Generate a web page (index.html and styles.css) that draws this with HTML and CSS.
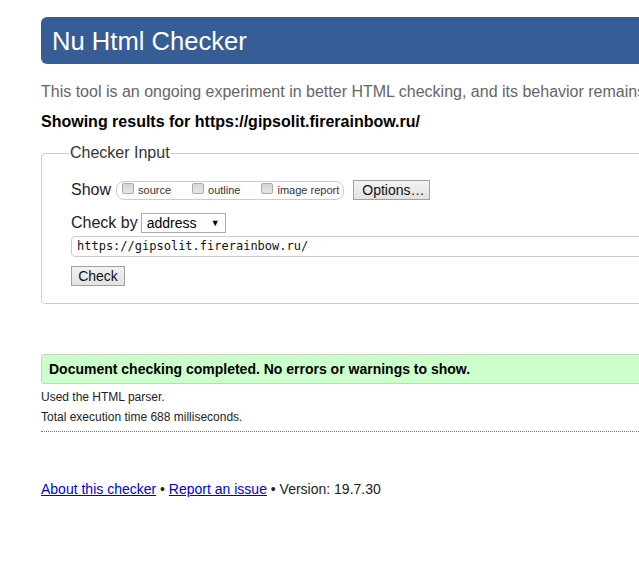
FILE: index.html
```html
<!DOCTYPE html>
<html lang="en">
<head>
<meta charset="utf-8">
<title>Nu Html Checker</title>
<link rel="stylesheet" href="styles.css">
</head>
<body>
<div class="page">
  <h1 class="title">Nu Html Checker</h1>
  <p class="intro">This tool is an ongoing experiment in better HTML checking, and its behavior remains subject to change</p>
  <p class="showing">Showing results for https://gipsolit.firerainbow.ru/</p>
  <fieldset class="input-box">
    <legend class="legend">Checker Input</legend>
    <div class="row show-row">
      <span class="label">Show</span>
      <span class="pill">
        <label class="opt"><input type="checkbox" class="cb">source</label>
        <label class="opt"><input type="checkbox" class="cb">outline</label>
        <label class="opt"><input type="checkbox" class="cb">image report</label>
      </span>
      <button class="btn options">Options…</button>
    </div>
    <div class="row checkby-row">
      <span class="label">Check by</span>
      <span class="select"><span class="select-text">address</span><span class="arrow">▼</span></span>
    </div>
    <div class="url">https://gipsolit.firerainbow.ru/</div>
    <button class="btn check">Check</button>
  </fieldset>
  <div class="success">Document checking completed. No errors or warnings to show.</div>
  <p class="meta meta-first">Used the HTML parser.</p>
  <p class="meta">Total execution time 688 milliseconds.</p>
  <div class="dotted"></div>
  <p class="footer"><a href="#">About this checker</a> • <a href="#">Report an issue</a> • Version: 19.7.30</p>
</div>
</body>
</html>
```

FILE: styles.css
```css
html, body {
  margin: 0;
  padding: 0;
  background: #fff;
  overflow: hidden;
}
body {
  font-family: "Liberation Sans", Arial, sans-serif;
  color: #222;
}
.page {
  width: 900px;
  padding: 17px 0 0 41px;
}
.title {
  margin: 0;
  height: 47px;
  background: #365d95;
  color: #fff;
  font-weight: normal;
  font-size: 25.6px;
  line-height: 49px;
  padding-left: 11px;
  border-radius: 6px;
  box-sizing: border-box;
}
.intro {
  margin: 19px 0 0;
  font-size: 16px;
  line-height: 18px;
  color: #666;
  white-space: nowrap;
}
.showing {
  margin: 12px 0 0;
  font-size: 16px;
  line-height: 18px;
  font-weight: bold;
  color: #000;
  white-space: nowrap;
}
.input-box {
  margin: 13px 0 0;
  padding: 14px 29px 17px;
  border: 1px solid #ccc;
  border-radius: 4px;
  min-width: 0;
}
.legend {
  padding: 0 1px;
  font-size: 16px;
  line-height: 18px;
  color: #333;
  margin-left: -2px;
}
.row {
  display: flex;
  align-items: center;
}
.label {
  font-size: 16px;
  color: #222;
}
.show-row {
  margin-top: 4px;
}
.pill {
  display: inline-flex;
  align-items: center;
  margin-left: 5px;
  height: 17px;
  padding: 0 4px 0 5px;
  border: 1px solid #ccc;
  border-radius: 8px;
}
.opt {
  display: inline-flex;
  align-items: center;
  font-size: 11px;
  color: #333;
  margin-right: 21px;
}
.opt:last-child {
  margin-right: 0;
}
.cb {
  appearance: none;
  -webkit-appearance: none;
  width: 12px;
  height: 11px;
  margin: 0 4px 3px 0;
  border: 1px solid #aaa;
  border-radius: 2px;
  background: linear-gradient(#d6d6d6, #e6e6e6);
  box-sizing: border-box;
}
.btn {
  font-family: "Liberation Sans", Arial, sans-serif;
  font-size: 14px;
  color: #111;
  background: linear-gradient(#f2f2f2, #e2e2e2);
  border: 1px solid #a0a0a0;
  border-radius: 0;
  padding: 0 8px;
  height: 20px;
  line-height: 18px;
}
.options {
  margin-left: 9px;
  width: 77px;
}
.checkby-row {
  margin-top: 13px;
}
.select {
  display: inline-flex;
  align-items: center;
  justify-content: space-between;
  margin-left: 3px;
  height: 20px;
  padding: 0 5px 0 5px;
  box-sizing: border-box;
  width: 85px;
  border: 1px solid #a9a9a9;
  font-size: 14px;
  color: #000;
}
.arrow {
  font-size: 9px;
}
.url {
  margin-top: 3px;
  height: 19px;
  border: 1px solid #ccc;
  border-radius: 4px;
  padding-left: 5px;
  font-family: "DejaVu Sans Mono", "Liberation Mono", monospace;
  font-size: 12px;
  line-height: 19px;
  color: #111;
}
.check {
  display: block;
  margin-top: 9px;
  width: 54px;
  padding: 0;
}
.success {
  margin: 50px 0 0;
  height: 28px;
  line-height: 28px;
  padding-left: 7px;
  background: #ccffcc;
  border: 1px solid #b7dfb7;
  border-radius: 3px;
  font-size: 14px;
  font-weight: bold;
  color: #000;
}
.meta {
  margin: 5px 0 0;
  font-size: 12px;
  line-height: 15px;
  color: #222;
}
.meta-first {
  margin-top: 6px;
}
.dotted {
  margin-top: 6px;
  border-top: 1px dotted #777;
}
.footer {
  margin: 49px 0 0;
  font-size: 14px;
  color: #222;
}
.footer a {
  color: #00c;
}
```
